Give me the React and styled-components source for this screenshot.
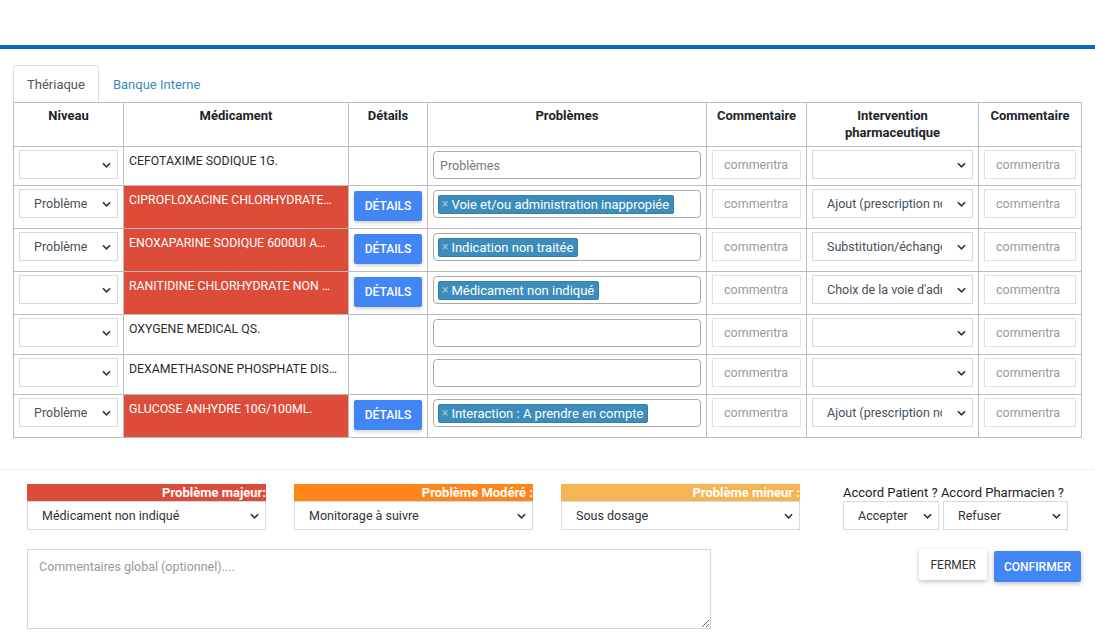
import React from "react";
import styled, { createGlobalStyle } from "styled-components";

const GlobalStyle = createGlobalStyle`
  body {
    margin: 0;
    background: #fff;
    font-family: Roboto, "Liberation Sans", sans-serif;
    color: #212529;
  }
  * { box-sizing: border-box; }
`;

const TopSpace = styled.div`
  height: 45px;
  background: #fff;
`;

const TopBar = styled.div`
  height: 4px;
  background: #0b6eb4;
`;

const Main = styled.div`
  padding: 16px 14px 0 13px;
`;

const Tabs = styled.div`
  display: flex;
  align-items: flex-end;
  height: 37px;
`;

const Tab = styled.div`
  height: 37px;
  padding: 0 13px;
  display: flex;
  align-items: center;
  font-size: 13px;
  color: ${(p) => (p.$active ? "#555" : "#3c8dbc")};
  border: 1px solid ${(p) => (p.$active ? "#ddd" : "transparent")};
  border-bottom: none;
  border-radius: 4px 4px 0 0;
  background: #fff;
`;

const Table = styled.table`
  width: 1068px;
  border-collapse: collapse;
  table-layout: fixed;
  font-size: 12.5px;
`;

const Th = styled.th`
  border: 1px solid #bcbcbc;
  font-weight: 700;
  font-size: 13px;
  vertical-align: top;
  padding: 4px 6px 0;
  height: 44px;
  line-height: 17px;
  color: #212529;
`;

const Td = styled.td`
  border: 1px solid #bcbcbc;
  vertical-align: top;
  padding: 3px 5px 0;
  height: ${(p) => p.$h}px;
  background: ${(p) => (p.$danger ? "#dd4b39" : "#fff")};
`;

const MedName = styled.div`
  color: ${(p) => (p.$danger ? "#fff" : "#2b2b2b")};
  font-size: 12.3px;
  padding-top: 3px;
  white-space: nowrap;
  overflow: hidden;
  text-overflow: ellipsis;
  line-height: 16px;
`;

const SelectWrap = styled.div`
  position: relative;
  width: ${(p) => p.$w || "100%"};
`;

const Select = styled.select`
  appearance: none;
  width: 100%;
  height: 29px;
  border: 1px solid #d6d9df;
  background: #fff;
  font-family: inherit;
  font-size: 12.5px;
  color: ${(p) => p.$color || "#495057"};
  padding: 0 30px 0 ${(p) => p.$pl || 14}px;
  border-radius: 0;
  outline: none;
`;

const Chevron = styled.svg`
  position: absolute;
  right: 7px;
  top: 12px;
  pointer-events: none;
`;

const ProblemBox = styled.div`
  height: 28px;
  border: 1px solid #a9a9a9;
  border-radius: 4px;
  padding: 4px 4px;
  display: flex;
  align-items: center;
  font-size: 12.5px;
  color: #777;
  margin-top: 1px;
`;

const Placeholder = styled.span`
  padding-left: 2px;
  color: #777;
`;

const Tag = styled.span`
  display: inline-flex;
  align-items: center;
  background: #3c8dbc;
  color: #fff;
  border: 1px solid #367fa9;
  border-radius: 2px;
  height: 19px;
  padding: 0 4px 0 3px;
  font-size: 13px;
  white-space: nowrap;
`;

const TagX = styled.span`
  color: #9fc4dc;
  font-size: 12px;
  margin-right: 3px;
`;

const CommentInput = styled.input`
  width: 100%;
  height: 29px;
  border: 1px solid #dde1e6;
  padding: 0 11px;
  font-family: inherit;
  font-size: 12.5px;
  outline: none;
  &::placeholder { color: #9a9a9a; }
`;

const DetailsButton = styled.button`
  width: 68px;
  height: 30px;
  margin-top: 2px;
  border: none;
  border-radius: 2px;
  background: #4285f4;
  color: #fff;
  font-family: inherit;
  font-size: 12px;
  font-weight: 500;
  box-shadow: 0 2px 4px rgba(0, 0, 0, 0.18);
`;

const Footer = styled.div`
  margin-top: 31px;
  border-top: 1px solid #eee;
  padding: 14px 14px 0 27px;
`;

const FooterRow = styled.div`
  display: flex;
  align-items: flex-start;
`;

const Group = styled.div`
  width: 239px;
  margin-right: ${(p) => p.$mr || 28}px;
`;

const Level = styled.div`
  height: 17px;
  line-height: 17px;
  background: ${(p) => p.$bg};
  color: #fff;
  font-weight: 700;
  font-size: 13px;
  text-align: right;
  white-space: nowrap;
  overflow: hidden;
`;

const AccordLabel = styled.div`
  height: 17px;
  line-height: 17px;
  font-size: 13px;
  color: #222;
  white-space: nowrap;
`;

const AccordSelects = styled.div`
  display: flex;
  gap: 4px;
`;

const SecondRow = styled.div`
  display: flex;
  justify-content: space-between;
  align-items: flex-start;
  margin-top: 19px;
`;

const Textarea = styled.textarea`
  width: 684px;
  height: 80px;
  border: 1px solid #d4d7dc;
  padding: 9px 11px;
  font-family: inherit;
  font-size: 12.5px;
  resize: vertical;
  outline: none;
  &::placeholder { color: #999; }
`;

const Buttons = styled.div`
  display: flex;
  gap: 7px;
  align-items: flex-start;
`;

const ActionButton = styled.button`
  height: 31px;
  padding: 0 ${(p) => (p.$primary ? 10 : 11)}px;
  margin-top: ${(p) => (p.$primary ? 2 : 0)}px;
  border: none;
  border-radius: 2px;
  font-family: inherit;
  font-size: 12px;
  font-weight: ${(p) => (p.$primary ? 500 : 400)};
  background: ${(p) => (p.$primary ? "#4285f4" : "#fff")};
  color: ${(p) => (p.$primary ? "#fff" : "#333")};
  box-shadow: 0 2px 4px rgba(0, 0, 0, 0.18), 0 1px 6px rgba(0, 0, 0, 0.08);
`;

const ChevronIcon = () => (
  <Chevron width="9" height="6" viewBox="0 0 10 6">
    <path d="M1 1 L5 5 L9 1" fill="none" stroke="#333" strokeWidth="1.8" />
  </Chevron>
);

const Dropdown = ({ value, w, color, pl }) => (
  <SelectWrap $w={w}>
    <Select $color={color} $pl={pl} value={value} onChange={() => {}}>
      <option value={value}>{value}</option>
    </Select>
    <ChevronIcon />
  </SelectWrap>
);

const rows = [
  { niveau: "", med: "CEFOTAXIME SODIQUE 1G.", danger: false, tag: null, ph: "Problèmes", interv: "", h: 39 },
  { niveau: "Problème", med: "CIPROFLOXACINE CHLORHYDRATE…", danger: true, tag: "Voie et/ou administration inappropiée", interv: "Ajout (prescription nouvelle)", h: 43 },
  { niveau: "Problème", med: "ENOXAPARINE SODIQUE 6000UI A…", danger: true, tag: "Indication non traitée", interv: "Substitution/échange", h: 43 },
  { niveau: "", med: "RANITIDINE CHLORHYDRATE NON …", danger: true, tag: "Médicament non indiqué", interv: "Choix de la voie d'administration", h: 43 },
  { niveau: "", med: "OXYGENE MEDICAL QS.", danger: false, tag: null, ph: "", interv: "", h: 40 },
  { niveau: "", med: "DEXAMETHASONE PHOSPHATE DIS…", danger: false, tag: null, ph: "", interv: "", h: 40 },
  { niveau: "Problème", med: "GLUCOSE ANHYDRE 10G/100ML.", danger: true, tag: "Interaction : A prendre en compte", interv: "Ajout (prescription nouvelle)", h: 43 },
];

const App = () => (
  <>
    <GlobalStyle />
    <TopSpace />
    <TopBar />
    <Main>
      <Tabs>
        <Tab $active>Thériaque</Tab>
        <Tab>Banque Interne</Tab>
      </Tabs>
      <Table>
        <colgroup>
          <col style={{ width: 110 }} />
          <col style={{ width: 225 }} />
          <col style={{ width: 79 }} />
          <col style={{ width: 279 }} />
          <col style={{ width: 100 }} />
          <col style={{ width: 172 }} />
          <col style={{ width: 103 }} />
        </colgroup>
        <thead>
          <tr>
            <Th>Niveau</Th>
            <Th>Médicament</Th>
            <Th>Détails</Th>
            <Th>Problèmes</Th>
            <Th>Commentaire</Th>
            <Th>Intervention pharmaceutique</Th>
            <Th>Commentaire</Th>
          </tr>
        </thead>
        <tbody>
          {rows.map((r, i) => (
            <tr key={i}>
              <Td $h={r.h}>
                <Dropdown value={r.niveau} />
              </Td>
              <Td $h={r.h} $danger={r.danger}>
                <MedName $danger={r.danger}>{r.med}</MedName>
              </Td>
              <Td $h={r.h}>{r.danger && <DetailsButton>DÉTAILS</DetailsButton>}</Td>
              <Td $h={r.h}>
                <ProblemBox>
                  {r.tag ? (
                    <Tag>
                      <TagX>×</TagX>
                      {r.tag}
                    </Tag>
                  ) : (
                    <Placeholder>{r.ph}</Placeholder>
                  )}
                </ProblemBox>
              </Td>
              <Td $h={r.h}>
                <CommentInput placeholder="commentra" />
              </Td>
              <Td $h={r.h}>
                <Dropdown value={r.interv} />
              </Td>
              <Td $h={r.h}>
                <CommentInput placeholder="commentra" />
              </Td>
            </tr>
          ))}
        </tbody>
      </Table>
    </Main>
    <Footer>
      <FooterRow>
        <Group>
          <Level $bg="#dd4b39">Problème majeur:</Level>
          <Dropdown value="Médicament non indiqué" color="#333" />
        </Group>
        <Group>
          <Level $bg="#ff851b">Problème Modéré :</Level>
          <Dropdown value="Monitorage à suivre" color="#333" />
        </Group>
        <Group $mr={43}>
          <Level $bg="#f5b552">Problème mineur :</Level>
          <Dropdown value="Sous dosage" color="#333" />
        </Group>
        <div>
          <AccordLabel>Accord Patient ? Accord Pharmacien ?</AccordLabel>
          <AccordSelects>
            <Dropdown value="Accepter" w="96px" color="#333" />
            <Dropdown value="Refuser" w="125px" color="#333" />
          </AccordSelects>
        </div>
      </FooterRow>
      <SecondRow>
        <Textarea placeholder="Commentaires global (optionnel)...." />
        <Buttons>
          <ActionButton>FERMER</ActionButton>
          <ActionButton $primary>CONFIRMER</ActionButton>
        </Buttons>
      </SecondRow>
    </Footer>
  </>
);

export default App;
